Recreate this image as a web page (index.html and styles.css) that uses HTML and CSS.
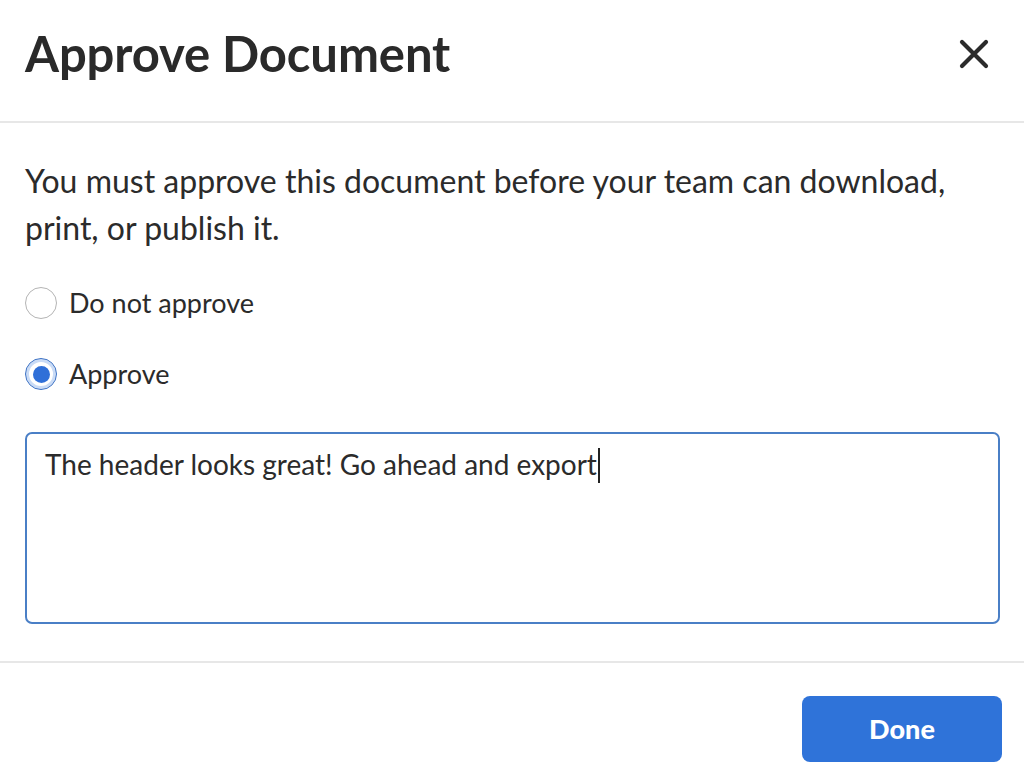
FILE: index.html
```html
<!DOCTYPE html>
<html lang="en">
<head>
<meta charset="utf-8">
<title>Approve Document</title>
<link rel="stylesheet" href="styles.css">
</head>
<body>
<div class="dialog" role="dialog" aria-labelledby="dlg-title">
  <header class="dialog-header">
    <h1 id="dlg-title" class="dialog-title">Approve Document</h1>
    <button class="close-btn" type="button" aria-label="Close">
      <svg width="30" height="30" viewBox="0 0 30 30" aria-hidden="true">
        <path d="M3 3 L27 27 M27 3 L3 27" stroke="#2b2b2b" stroke-width="4.2" stroke-linecap="round" fill="none"/>
      </svg>
    </button>
  </header>

  <section class="dialog-body">
    <p class="intro">You must approve this document before your team can download, print, or publish it.</p>

    <div class="choices">
      <label class="choice">
        <span class="radio"></span>
        <span class="choice-label">Do not approve</span>
      </label>
      <label class="choice">
        <span class="radio is-checked"></span>
        <span class="choice-label">Approve</span>
      </label>
    </div>

    <div class="comment" role="textbox" aria-multiline="true">The header looks great! Go ahead and export<span class="caret"></span></div>
  </section>

  <footer class="dialog-footer">
    <button class="done-btn" type="button">Done</button>
  </footer>
</div>
</body>
</html>
```
FILE: styles.css
```css
* {
  box-sizing: border-box;
}

html, body {
  margin: 0;
  background: #ffffff;
}

body {
  font-family: "Lato", "Liberation Sans", sans-serif;
  color: #2b2b2b;
}

.dialog {
  width: 1024px;
  height: 780px;
  display: flex;
  flex-direction: column;
}

/* Header: title + close */
.dialog-header {
  height: 123px;
  display: flex;
  align-items: center;
  justify-content: space-between;
  padding: 0 35px 15px 25px;
  border-bottom: 2px solid #e7e7e7;
}

.dialog-title {
  margin: 0;
  font-size: 49px;
  line-height: 60px;
  font-weight: 700;
  color: #2a2a2a;
  letter-spacing: -0.1px;
}

.close-btn {
  width: 30px;
  height: 30px;
  padding: 0;
  border: 0;
  background: none;
  display: flex;
  margin-top: 2px;
}

/* Body */
.dialog-body {
  padding: 34px 24px 37px 25px;
  border-bottom: 2px solid #e7e7e7;
}

.intro {
  margin: 0;
  font-size: 32px;
  line-height: 47px;
  color: #2b2b2b;
  max-width: 940px;
}

.choices {
  margin-top: 32px;
  display: flex;
  flex-direction: column;
  gap: 31px;
}

.choice {
  height: 40px;
  display: flex;
  align-items: center;
  gap: 12px;
}

.radio {
  width: 32px;
  height: 32px;
  border-radius: 50%;
  border: 1.5px solid #b4b4b4;
  background: #ffffff;
  flex: none;
  position: relative;
}

.radio.is-checked {
  border: 1.5px solid #3a70c4;
  box-shadow: inset 0 0 0 3px #c9dbf6;
}

.radio.is-checked::after {
  content: "";
  position: absolute;
  left: 50%;
  top: 50%;
  width: 17px;
  height: 17px;
  margin: -8.5px 0 0 -8.5px;
  border-radius: 50%;
  background: #2f6fd8;
}

.choice-label {
  font-size: 27px;
  line-height: 40px;
  color: #2b2b2b;
}

/* Comment box */
.comment {
  margin-top: 38px;
  height: 192px;
  padding: 13px 18px;
  border: 2px solid #4a7fc6;
  border-radius: 7px;
  font-size: 28px;
  line-height: 34px;
  color: #2b2b2b;
}

.caret {
  display: inline-block;
  width: 2px;
  height: 35px;
  background: #222222;
  vertical-align: -8px;
  margin-left: 1px;
}

/* Footer */
.dialog-footer {
  flex: 1;
  display: flex;
  justify-content: flex-end;
  align-items: flex-start;
  padding: 33px 22px 0 0;
}

.done-btn {
  width: 200px;
  height: 66px;
  border: 0;
  border-radius: 8px;
  background: #2f73d9;
  color: #ffffff;
  font-family: "Lato", "Liberation Sans", sans-serif;
  font-size: 27px;
  font-weight: 900;
  line-height: 62px;
  padding: 0;
}
```
